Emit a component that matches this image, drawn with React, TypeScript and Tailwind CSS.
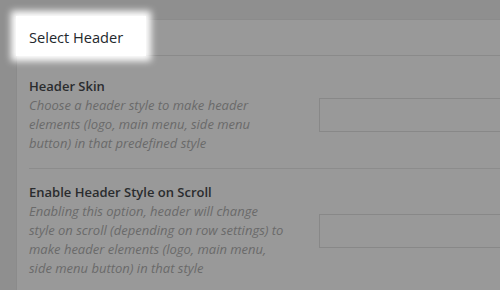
import React from "react";

const font = { fontFamily: '"Open Sans", "Noto Sans", sans-serif' };

function Row({
  label,
  lines,
  top,
  bottom,
  border,
}: {
  label: string;
  lines: string[];
  top: string;
  bottom: string;
  border: boolean;
}) {
  return (
    <div className={`ml-3 flex items-center ${top} ${bottom} ${border ? "border-b border-[#8c8c8c]" : ""}`}>
      <div className="w-[290px] shrink-0">
        <div className="text-[13px] leading-[19px] font-semibold text-[#2a2c2e]">{label}</div>
        <div className="text-[13px] leading-[19px] italic text-[#6a6a6a]">
          {lines.map((l, i) => (
            <div key={i} className="whitespace-nowrap">
              {l}
            </div>
          ))}
        </div>
      </div>
      <div className="h-[34px] w-[220px] shrink-0 border border-[#888888]" />
    </div>
  );
}

export default function App() {
  return (
    <div className="w-[500px] h-[290px] overflow-hidden bg-[#8f8f8f] pl-[16px] pt-[19px]" style={font}>
      <div className="h-full bg-[#999999] border-l border-t border-[#8b8b8b]">
        <div className="relative h-[36px] border-b border-[#8a8a8a] flex items-center pl-3">
          <div className="absolute left-[-1px] top-[-4px] w-[130px] h-[40px] bg-white shadow-[0_0_7px_5px_#ffffff]" />
          <span className="relative text-[14.6px] text-[#23282d]">Select Header</span>
        </div>
        <Row
          label="Header Skin"
          lines={[
            "Choose a header style to make header",
            "elements (logo, main menu, side menu",
            "button) in that predefined style",
          ]}
          top="pt-[21px]"
          bottom="pb-[15px]"
          border
        />
        <Row
          label="Enable Header Style on Scroll"
          lines={[
            "Enabling this option, header will change",
            "style on scroll (depending on row settings) to",
            "make header elements (logo, main menu,",
            "side menu button) in that style",
          ]}
          top="pt-[14px]"
          bottom="pb-[15px]"
          border={false}
        />
      </div>
    </div>
  );
}
